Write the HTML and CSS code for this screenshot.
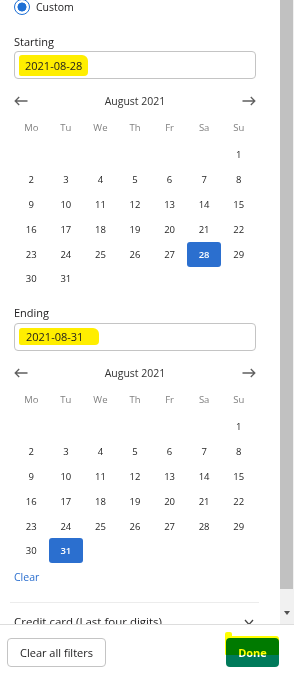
FILE: index.html
```html
<!DOCTYPE html>
<html lang="en">
<head>
    <meta charset="UTF-8">
    <meta name="viewport" content="width=device-width, initial-scale=1.0">
    <title>Date filter</title>
    <link rel="stylesheet" href="styles.css">
</head>
<body>

    <div class="panel">
        <div class="scroller">
            <div class="content">
                <label class="radio-row"><span class="radio"></span>Custom</label>

                <div class="range">
                    <div class="field-label">Starting</div>
                    <div class="date-input"><span class="mark">2021-08-28</span></div>
                    <div class="calendar" data-selected="28"></div>
                </div>

                <div class="range">
                    <div class="field-label">Ending</div>
                    <div class="date-input"><span class="mark mark-end">2021-08-31</span></div>
                    <div class="calendar" data-selected="31"></div>
                </div>

                <a class="clear-link">Clear</a>
                <div class="divider"></div>
                <div class="section-row">
                    <span>Credit card (Last four digits)</span>
                    <svg class="chevron" width="10" height="7" viewBox="0 0 10 7"><path d="M1 1l4 4.5L9 1" fill="none" stroke="#444" stroke-width="1.3"/></svg>
                </div>
            </div>
            <div class="scrollbar">
                <div class="thumb"></div>
                <div class="arrow-box"><span class="arrow-down"></span></div>
            </div>
        </div>

        <div class="footer">
            <button class="btn btn-clear">Clear all filters</button>
            <div class="done-wrap">
                <button class="btn btn-done">Done</button>
                <span class="highlighter"></span>
            </div>
        </div>
    </div>

    <script>
        const dayNames = ["Mo", "Tu", "We", "Th", "Fr", "Sa", "Su"];
        const arrowLeft = '<svg width="14" height="10" viewBox="0 0 14 10"><path d="M13.5 5H1.2M5.2 1L1.2 5l4 4" fill="none" stroke="#5f5f5f" stroke-width="1.3"/></svg>';
        const arrowRight = '<svg width="14" height="10" viewBox="0 0 14 10"><path d="M0.5 5h12.3M8.8 1l4 4-4 4" fill="none" stroke="#5f5f5f" stroke-width="1.3"/></svg>';

        // August 2021 starts on a Sunday
        document.querySelectorAll(".calendar").forEach((cal) => {
            const selected = Number(cal.dataset.selected);
            let html = `<div class="cal-head">${arrowLeft}<span>August 2021</span>${arrowRight}</div>`;
            html += '<div class="cal-grid">';
            dayNames.forEach((d) => { html += `<span class="day-name">${d}</span>`; });
            for (let i = 0; i < 6; i++) html += '<span class="day"></span>';
            for (let d = 1; d <= 31; d++) {
                html += `<span class="day${d === selected ? " selected" : ""}">${d}</span>`;
            }
            html += '</div>';
            cal.innerHTML = html;
        });
    </script>

</body>
</html>
```

FILE: styles.css
```css
* {
    box-sizing: border-box;
}
body {
    margin: 0;
    font-family: "Open Sans", "Noto Sans", sans-serif;
    font-size: 11px;
    color: #1d1c1d;
    background: #fff;
}
.panel {
    width: 294px;
    height: 676px;
    overflow: hidden;
}
.scroller {
    display: flex;
    height: 624px;
    overflow: hidden;
}
.content {
    width: 280px;
    padding: 0 24px 0 14px;
}
.radio-row {
    display: flex;
    align-items: center;
    gap: 6px;
    height: 20px;
    margin-top: -3px;
    font-size: 10.5px;
}
.radio {
    width: 16px;
    height: 16px;
    border-radius: 50%;
    border: 1.5px solid #1d6fd5;
    background: radial-gradient(circle, #1d6fd5 0 4.2px, #fff 4.8px);
}
.range {
    margin-top: 16.5px;
}
.range + .range {
    margin-top: 14px;
}
.field-label {
    line-height: 15px;
}
.date-input {
    margin-top: 2.5px;
    height: 28px;
    border: 1px solid #c4c4c4;
    border-radius: 4px;
    display: flex;
    align-items: center;
    padding-left: 4px;
}
.mark {
    background: #ffee00;
    padding: 3px 6px 3px 6px;
    line-height: 15px;
    border-radius: 3px 6px 4px 2px;
}
.mark-end {
    padding: 1px 16px 1px 7px;
}
.calendar {
    margin-top: 11px;
}
.cal-head {
    display: flex;
    justify-content: space-between;
    align-items: center;
    height: 22px;
    font-size: 10.5px;
    color: #333;
}
.cal-grid {
    display: grid;
    grid-template-columns: repeat(7, 1fr);
    grid-template-rows: 30.6px repeat(6, 24.8px);
    font-size: 9.5px;
}
.cal-grid span {
    display: flex;
    align-items: center;
    justify-content: center;
}
.day-name {
    color: #808080;
}
.day {
    color: #262626;
}
.day.selected {
    background: #2b6fcf;
    color: #fff;
    font-weight: 600;
    border-radius: 3px;
}
.clear-link {
    display: block;
    margin-top: 7px;
    line-height: 15px;
    font-size: 10.5px;
    color: #2b6fcf;
}
.divider {
    height: 1px;
    background: #ececec;
    margin: 17px -3px 0 -4px;
}
.section-row {
    display: flex;
    justify-content: space-between;
    align-items: flex-start;
    padding-top: 11px;
    line-height: 15px;
    font-size: 11.5px;
    color: #1d1c1d;
}
.chevron {
    margin-top: 5px;
    margin-right: 2px;
}
.scrollbar {
    width: 14px;
    background: #f1f1f1;
    display: flex;
    flex-direction: column;
}
.thumb {
    height: 589px;
    width: 13px;
    background: #c1c1c1;
}
.arrow-box {
    margin-top: auto;
    margin-bottom: 3px;
    height: 16px;
    display: flex;
    align-items: center;
    justify-content: center;
}
.arrow-down {
    width: 0;
    height: 0;
    border-left: 3.5px solid transparent;
    border-right: 3.5px solid transparent;
    border-top: 4px solid #505050;
}
.footer {
    height: 52px;
    border-top: 1px solid #dddddd;
    display: flex;
    justify-content: space-between;
    align-items: flex-start;
    padding: 13px 15px 0 7px;
}
.btn {
    height: 29px;
    border-radius: 4px;
    font-family: inherit;
    font-size: 11px;
    cursor: pointer;
}
.btn-clear {
    width: 99px;
    background: #fff;
    border: 1px solid #c4c4c4;
    color: #1d1c1d;
}
.done-wrap {
    position: relative;
}
.btn-done {
    width: 53px;
    background: #007a5a;
    border: none;
    color: #fff;
    font-weight: 700;
}
.highlighter {
    position: absolute;
    left: -1px;
    right: 0;
    top: -2px;
    height: 19px;
    background: #ffff00;
    mix-blend-mode: multiply;
    border-radius: 2px 3px 1px 1px;
}
.highlighter::before {
    content: "";
    position: absolute;
    left: 0;
    top: -4px;
    width: 7px;
    height: 6px;
    background: #ffff00;
    border-radius: 2px 2px 0 0;
}
```
